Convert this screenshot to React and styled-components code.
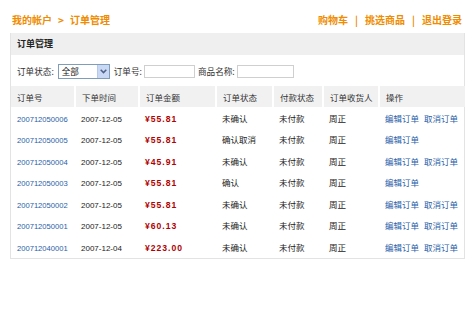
import React from 'react'
import styled, { createGlobalStyle } from 'styled-components'

const GlobalStyle = createGlobalStyle`
    body {
        margin      : 0;
        background  : #fff;
        font-family : "Noto Sans CJK SC", "DejaVu Sans", sans-serif;
        font-size   : 9px;
        color       : #333;
    }
`

const orders = [
    { id: '200712050006', date: '2007-12-05', price: '55.81', status: '未确认', cancel: true },
    { id: '200712050005', date: '2007-12-05', price: '55.81', status: '确认取消', cancel: false },
    { id: '200712050004', date: '2007-12-05', price: '45.91', status: '未确认', cancel: true },
    { id: '200712050003', date: '2007-12-05', price: '55.81', status: '确认', cancel: false },
    { id: '200712050002', date: '2007-12-05', price: '55.81', status: '未确认', cancel: true },
    { id: '200712050001', date: '2007-12-05', price: '60.13', status: '未确认', cancel: true },
    { id: '200712040001', date: '2007-12-04', price: '223.00', status: '未确认', cancel: true },
]

const columns = [
    { label: '订单号', width: 64 },
    { label: '下单时间', width: 64 },
    { label: '订单金额', width: 77 },
    { label: '订单状态', width: 57 },
    { label: '付款状态', width: 50 },
    { label: '订单收货人', width: 56 },
    { label: '操作', width: 86 },
]

const App = () => {
    return (
        <React.Fragment>
            <GlobalStyle />
            <Page>
                <TopBar>
                    <Crumbs>我的帐户<span className="arrow">&gt;</span>订单管理</Crumbs>
                    <TopLinks>
                        <a>购物车</a>
                        <span className="sep">|</span>
                        <a>挑选商品</a>
                        <span className="sep">|</span>
                        <a>退出登录</a>
                    </TopLinks>
                </TopBar>
                <Panel>
                    <PanelTitle>订单管理</PanelTitle>
                    <Filter>
                        <label>订单状态:</label>
                        <Select>
                            <span>全部</span>
                            <SelectArrow>
                                <svg width="7" height="5" viewBox="0 0 7 5">
                                    <path d="M0.7 0.8 L3.5 3.6 L6.3 0.8" fill="none" stroke="#4d6185" strokeWidth="1.5" />
                                </svg>
                            </SelectArrow>
                        </Select>
                        <label>订单号:</label>
                        <TextBox $width={49} />
                        <label>商品名称:</label>
                        <TextBox $width={55} />
                    </Filter>
                    <Table>
                        <colgroup>
                            {columns.map((c) => <col key={c.label} style={{ width: c.width }} />)}
                        </colgroup>
                        <thead>
                            <tr>
                                {columns.map((c) => <th key={c.label}>{c.label}</th>)}
                            </tr>
                        </thead>
                        <tbody>
                            {orders.map((o) => (
                                <tr key={o.id}>
                                    <td><Link $num>{o.id}</Link></td>
                                    <td><Num>{o.date}</Num></td>
                                    <td><Price>¥{o.price}</Price></td>
                                    <td>{o.status}</td>
                                    <td>未付款</td>
                                    <td>周正</td>
                                    <td>
                                        <Link>编辑订单</Link>
                                        {o.cancel && <Link className="gap">取消订单</Link>}
                                    </td>
                                </tr>
                            ))}
                        </tbody>
                    </Table>
                </Panel>
            </Page>
        </React.Fragment>
    )
}

export default App

const Page = styled.div`
    width      : 474px;
    padding    : 10px 9px 0 10px;
    box-sizing : border-box;
`

const TopBar = styled.div`
    display         : flex;
    justify-content : space-between;
    align-items     : center;
    height          : 19px;
    padding         : 0 3px 0 2px;
    margin-bottom   : 4px;
    color           : #ef8c00;
    font-weight     : bold;
    font-size       : 10px;
`

const Crumbs = styled.div`
    .arrow {
        margin : 0 6px;
    }
`

const TopLinks = styled.div`
    display : flex;
    gap     : 7px;

    a {
        cursor : pointer;
    }
`

const Panel = styled.div`
    border     : 1px solid #e3e3e3;
    border-top : none;
`

const PanelTitle = styled.div`
    height      : 22px;
    line-height : 22px;
    padding     : 0 6px;
    background  : #efefef;
    font-weight : bold;
    color       : #222;
`

const Filter = styled.div`
    display     : flex;
    align-items : center;
    height      : 31px;
    padding     : 1px 6px 0;
    box-sizing  : border-box;
    font-size   : 8.6px;

    label {
        color        : #333;
        margin-right : 2px;
    }
`

const Select = styled.div`
    display         : flex;
    align-items     : center;
    justify-content : space-between;
    width           : 52px;
    height          : 15px;
    box-sizing      : border-box;
    border          : 1px solid #7f9db9;
    padding-left    : 3px;
    margin          : 0 4px 0 2px;
    background      : #fff;
    color           : #111;
`

const SelectArrow = styled.div`
    display         : flex;
    align-items     : center;
    justify-content : center;
    width           : 11px;
    height          : 13px;
    background      : #c9d8f5;
    border-left     : 1px solid #b7c8ec;
`

const TextBox = styled.div`
    width        : ${(p) => p.$width}px;
    height       : 11px;
    border       : 1px solid #cfcfcf;
    background   : #fff;
    margin-right : 3px;
`

const Table = styled.table`
    width           : 100%;
    border-collapse : collapse;
    table-layout    : fixed;

    th {
        height       : 21px;
        padding      : 0 6px;
        background   : #f1f1f1;
        border-right : 2px solid #fff;
        text-align   : left;
        font-weight  : normal;
        font-size    : 8.5px;
        color        : #333;
        white-space  : nowrap;
    }

    th:last-child {
        border-right : none;
    }

    td {
        height      : 21.5px;
        padding     : 0 6px;
        white-space : nowrap;
        color       : #222;
        font-size   : 8.5px;
    }
`

const Num = styled.span`
    font-family : "Liberation Sans", sans-serif;
    font-size   : 8px;
`

const Link = styled.a`
    color       : #1f5ea8;
    cursor      : pointer;
    font-family : ${(p) => (p.$num ? '"Liberation Sans", sans-serif' : 'inherit')};
    font-size   : ${(p) => (p.$num ? '7.6px' : 'inherit')};

    &.gap {
        margin-left : 5px;
    }
`

const Price = styled.span`
    color          : #b00000;
    font-family    : "Liberation Sans", "Noto Sans CJK SC", sans-serif;
    font-weight    : bold;
    font-size      : 8.6px;
    letter-spacing : 1px;
`
